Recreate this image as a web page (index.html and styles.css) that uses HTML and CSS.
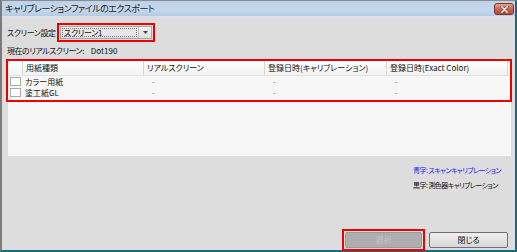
FILE: index.html
```html
<!DOCTYPE html>
<html lang="ja">
<head>
    <meta charset="UTF-8">
    <title>キャリブレーションファイルのエクスポート</title>
    <link rel="stylesheet" href="styles.css">
</head>
<body>
    <div class="window">
        <div class="titlebar">
            <span class="title">キャリブレーションファイルのエクスポート</span>
            <span class="close-btn">
                <svg width="9" height="7" viewBox="0 0 9 7">
                    <path d="M1.5 0.5 L7.5 6.5 M7.5 0.5 L1.5 6.5" stroke="#5a2a22" stroke-width="2.6" stroke-linecap="round"/>
                    <path d="M1.5 0.5 L7.5 6.5 M7.5 0.5 L1.5 6.5" stroke="#fff" stroke-width="1.5" stroke-linecap="round"/>
                </svg>
            </span>
        </div>

        <div class="content">
            <div class="screen-row">
                <span class="label">スクリーン設定</span>
                <div class="mark">
                    <div class="combo">
                        <span class="combo-value">スクリーン1</span>
                        <span class="combo-arrow">
                            <svg width="5" height="3" viewBox="0 0 5 3"><path d="M0 0 H5 L2.5 3 Z" fill="#444"/></svg>
                        </span>
                    </div>
                </div>
            </div>

            <div class="current-row">
                <span class="current-label">現在のリアルスクリーン:</span>
                <span class="current-value">Dot190</span>
            </div>

            <div class="paper-list">
                <div class="mark list-mark">
                    <div class="list-head">
                        <span class="cell"></span>
                        <span class="cell">用紙種類</span>
                        <span class="cell">リアルスクリーン</span>
                        <span class="cell">登録日時(キャリブレーション)</span>
                        <span class="cell">登録日時(Exact Color)</span>
                    </div>
                    <div class="list-row">
                        <span class="check-cell"><span class="checkbox"></span></span>
                        <span>カラー用紙</span>
                        <span class="dash">-</span>
                        <span class="dash">-</span>
                        <span class="dash">-</span>
                    </div>
                    <div class="list-row">
                        <span class="check-cell"><span class="checkbox"></span></span>
                        <span>塗工紙GL</span>
                        <span class="dash">-</span>
                        <span class="dash">-</span>
                        <span class="dash">-</span>
                    </div>
                </div>
            </div>

            <div class="legend">
                <div class="legend-blue">青字: スキャンキャリブレーション</div>
                <div>黒字: 測色器キャリブレーション</div>
            </div>

            <div class="buttons">
                <div class="mark btn-mark">
                    <button class="btn" disabled>選択</button>
                </div>
                <button class="btn">閉じる</button>
            </div>
        </div>
    </div>
</body>
</html>
```

FILE: styles.css
```css
body {
    margin: 0;
    padding: 0;
    background: #dcdcdc;
    font-family: "Noto Sans CJK JP", "Noto Sans", sans-serif;
    font-size: 8px;
    font-feature-settings: "palt";
    color: #111;
}

.window {
    width: 517px;
    height: 252px;
    box-sizing: border-box;
    border-top: 1px solid #8c8c8c;
    border-left: 2px solid #7b7b7b;
    border-right: 2px solid #1f6878;
    border-bottom: 2px solid #136d7c;
    display: flex;
    flex-direction: column;
    background: #dddddd;
}

.titlebar {
    height: 15px;
    display: flex;
    align-items: center;
    justify-content: space-between;
    padding: 0 1px 0 3px;
    background: linear-gradient(#bdd2ea, #c6d8ed 60%, #b4cbe4);
    border-bottom: 1px solid #d6e2ef;
    flex-shrink: 0;
}

.title {
    font-size: 9px;
    letter-spacing: -0.5px;
    color: #222;
}

.close-btn {
    width: 18px;
    height: 10px;
    margin-top: 1px;
    border: 1px solid #7f3429;
    border-radius: 3px;
    background: linear-gradient(#e2a596, #cf6a56 45%, #bd4632);
    display: flex;
    align-items: center;
    justify-content: center;
}

.content {
    flex-grow: 1;
    display: flex;
    flex-direction: column;
    padding: 7px 5px 0 5px;
}

.mark {
    border: 2px solid #ee0000;
}

.screen-row {
    display: flex;
    align-items: center;
    height: 17px;
}

.label {
    width: 50px;
    letter-spacing: -0.4px;
    white-space: nowrap;
}

.screen-row .mark {
    width: 92px;
    height: 13px;
    padding: 1px;
}

.combo {
    display: flex;
    background: linear-gradient(#f2f2f2, #dedede);
    border: 1px solid #a8a8a8;
    box-sizing: border-box;
    height: 13px;
}

.combo-value {
    flex-grow: 1;
    margin: 1px;
    padding-left: 1px;
    border: 1px dotted #777;
    background: #e6e6e6;
    line-height: 8px;
    letter-spacing: -0.3px;
}

.combo-arrow {
    width: 12px;
    border-left: 1px solid #c4c4c4;
    display: flex;
    align-items: center;
    justify-content: center;
}

.current-row {
    margin-top: 4px;
    height: 11px;
    line-height: 11px;
    display: flex;
    gap: 7px;
}

.current-label {
    letter-spacing: -0.5px;
}

.paper-list {
    margin: 4px 0 0 1px;
    height: 95px;
    width: 502px;
    background: #f7f7f7;
    border-right: 1px solid #fcfcfc;
    border-bottom: 1px solid #fcfcfc;
}

.list-mark {
    margin: -1px 0 0 -2px;
    width: 502px;
}

.list-head,
.list-row {
    display: grid;
    grid-template-columns: 15px 121px 121px 122px 121px;
}

.list-head {
    height: 14px;
    line-height: 14px;
    background: linear-gradient(#fdfdfd, #f3f3f3);
    border-bottom: 1px solid #e2e2e2;
}

.list-head .cell {
    border-right: 1px solid #d7d7d7;
    padding-left: 3px;
}

.list-row {
    height: 11px;
    line-height: 11px;
}

.list-row span {
    padding-left: 2px;
}

.list-row .dash {
    padding-left: 8px;
    color: #777;
}

.check-cell {
    display: flex;
    align-items: center;
}

.checkbox {
    width: 7px;
    height: 7px;
    background: #fff;
    border: 1px solid #aaa;
}

.list-row:last-child {
    margin-bottom: 2px;
}

.legend {
    margin: 9px 9px 0 0;
    align-self: flex-end;
    display: flex;
    flex-direction: column;
    gap: 5px;
    line-height: 10px;
    font-size: 7px;
    letter-spacing: -0.55px;
    white-space: nowrap;
}

.legend-blue {
    color: #2222ee;
}

.buttons {
    margin-top: auto;
    display: flex;
    align-items: center;
    justify-content: flex-end;
    gap: 4px;
    padding-right: 2px;
    height: 21px;
}

.btn-mark {
    padding: 1px;
}

.btn {
    width: 79px;
    height: 16px;
    padding: 0;
    font-family: inherit;
    font-size: 8px;
    font-feature-settings: "palt";
    color: #111;
    border: 1px solid #707070;
    border-radius: 2px;
    background: linear-gradient(#f0f0f0, #e4e4e4 50%, #d6d6d6);
}

.btn:disabled {
    width: 77px;
    color: #c2c2c2;
    border-color: #9c9c9c;
    background: #aeaeae;
}
```
